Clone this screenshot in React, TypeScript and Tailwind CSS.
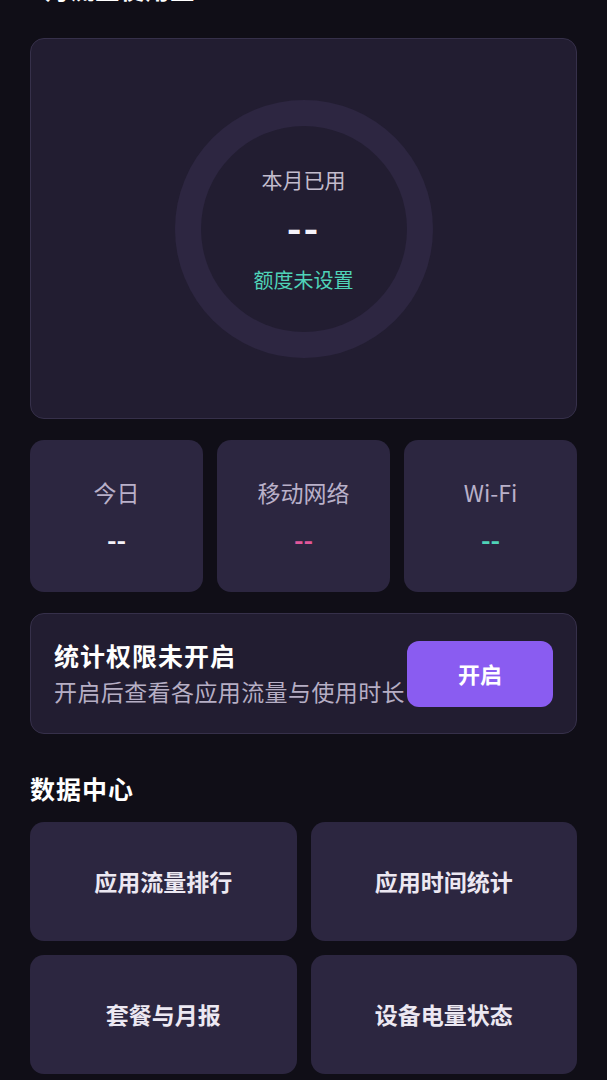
import React from 'react';

const font = { fontFamily: '"Noto Sans CJK SC", "Noto Sans", sans-serif' };

const stats = [
  { label: '今日', color: 'text-[#f4f1f8]' },
  { label: '移动网络', color: 'text-[#e2579b]' },
  { label: 'Wi-Fi', color: 'text-[#4fd3b8]' },
];

const tools = ['应用流量排行', '应用时间统计', '套餐与月报', '设备电量状态'];

export default function App() {
  return (
    <div style={font} className="min-h-[1080px] w-full bg-[#100e17] px-[30px] overflow-hidden">
      {/* Title scrolled mostly out of view */}
      <div className="-mt-[26px] h-[64px] text-[24px] leading-[30px] font-bold tracking-[1px] text-white">5月流量使用量</div>

      {/* Monthly usage ring */}
      <div className="flex h-[381px] items-center justify-center rounded-[14px] border border-[#36304a] bg-[#221d31]">
        <div className="flex h-[258px] w-[258px] items-center justify-center rounded-full bg-[#2d2641]">
          <div className="flex h-[206px] w-[206px] flex-col items-center justify-center rounded-full bg-[#221d31]">
            <div className="text-[21px] leading-[28px] text-[#c3bccd]">本月已用</div>
            <div className="mt-[11px] text-[40px] leading-[44px] font-bold text-[#f6f3fa] tracking-[2px]">--</div>
            <div className="mt-[19px] text-[20px] leading-[26px] text-[#4fd3b8]">额度未设置</div>
          </div>
        </div>
      </div>

      {/* Today / mobile / wifi */}
      <div className="mt-[21px] grid grid-cols-3 gap-[14px]">
        {stats.map((s) => (
          <div key={s.label} className="flex h-[152px] flex-col items-center justify-center rounded-[14px] bg-[#2c2640]">
            <div className="-mt-[2px] text-[23px] leading-[30px] text-[#b9b0c9]">{s.label}</div>
            <div className={`mt-[17px] text-[26px] leading-[30px] font-bold ${s.color}`}>--</div>
          </div>
        ))}
      </div>

      {/* Permission prompt */}
      <div className="mt-[21px] flex h-[121px] items-center justify-between rounded-[14px] border border-[#36304a] bg-[#221d31] pl-[23px] pr-[23px]">
        <div className="-mt-[3px]">
          <div className="text-[25px] leading-[32px] font-bold tracking-[1px] text-white">统计权限未开启</div>
          <div className="mt-[5px] text-[23px] leading-[30px] tracking-[0.4px] text-[#b6aec4]">开启后查看各应用流量与使用时长</div>
        </div>
        <button className="flex h-[66px] w-[146px] shrink-0 items-center justify-center rounded-[12px] bg-[#8a5cf1] text-[22px] font-bold text-white">
          开启
        </button>
      </div>

      {/* Data center */}
      <div className="mt-[38px] text-[25px] leading-[32px] font-bold tracking-[1px] text-white">数据中心</div>
      <div className="mt-[18px] grid grid-cols-2 gap-[14px]">
        {tools.map((t) => (
          <div key={t} className="flex h-[119px] items-center justify-center rounded-[14px] bg-[#2c2640] text-[23px] font-bold text-[#ece8f2]">
            {t}
          </div>
        ))}
      </div>
    </div>
  );
}
